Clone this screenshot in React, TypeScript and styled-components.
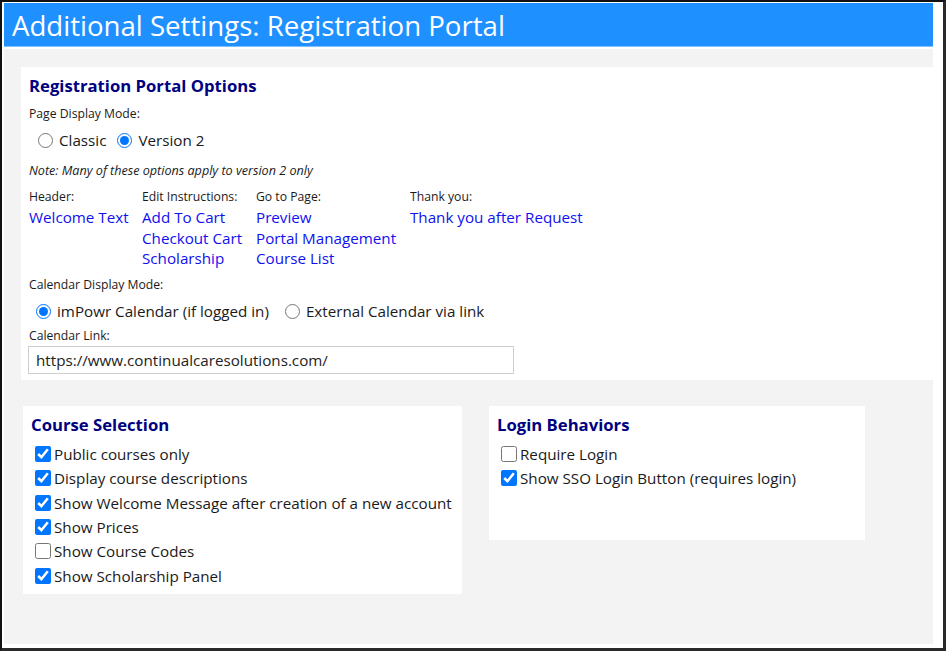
import React from "react";
import styled, { createGlobalStyle } from "styled-components";

const Global = createGlobalStyle`
  html, body { margin: 0; padding: 0; background: #fff; }
  body { font-family: "Open Sans", "Noto Sans", sans-serif; color: #1a1a1a; }
  * { box-sizing: border-box; }
`;

const Frame = styled.div`
  width: 946px;
  height: 651px;
  border-top: 2px solid #111;
  border-left: 2px solid #111;
  border-right: 3px solid #2a2a2a;
  border-bottom: 3px solid #2a2a2a;
  background: #fff;
  padding: 1px 10px 4px 2px;
  display: flex;
  flex-direction: column;
`;

const TitleBar = styled.div`
  height: 44px;
  background: #1e90ff;
  border-bottom: 1px solid #7fbfff;
  color: #fff;
  font-size: 27.6px;
  line-height: 44px;
  padding-left: 8px;
  flex: none;
`;

const Body = styled.div`
  margin-top: 2px;
  flex: 1;
  background: #f3f3f3;
  padding: 18px 0 0 17px;
  display: flex;
  flex-direction: column;
`;

const Panel = styled.div<{ $w?: number; $h?: number }>`
  background: #fff;
  ${(p) => (p.$w ? `width: ${p.$w}px;` : "")}
  ${(p) => (p.$h ? `height: ${p.$h}px;` : "")}
  padding: 7px 0 6px 8px;
`;

const PanelRow = styled.div`
  display: flex;
  gap: 27px;
  margin-top: 26px;
  margin-left: 2px;
  align-items: flex-start;
`;

const Heading = styled.div`
  color: #000080;
  font-weight: 700;
  font-size: 16.7px;
  line-height: 24px;
`;

const Label = styled.div<{ $mt?: number; $italic?: boolean }>`
  font-size: ${(p) => (p.$italic ? 12.6 : 12.2)}px;
  line-height: 16px;
  margin-top: ${(p) => p.$mt ?? 0}px;
  font-style: ${(p) => (p.$italic ? "italic" : "normal")};
`;

const RadioRow = styled.div<{ $mt?: number; $pl?: number }>`
  display: flex;
  align-items: center;
  height: 24px;
  margin-top: ${(p) => p.$mt ?? 0}px;
  padding-left: ${(p) => p.$pl ?? 0}px;
  font-size: 15.2px;
`;

const RadioLabel = styled.label<{ $gap?: number }>`
  display: flex;
  align-items: center;
  margin-right: ${(p) => p.$gap ?? 0}px;
`;

const Radio = styled.input.attrs({ type: "radio" })`
  width: 15px;
  height: 15px;
  margin: 0 6px 0 0;
  accent-color: #0075ff;
`;

const LinkGrid = styled.div`
  display: grid;
  grid-template-columns: 113px 114px 154px auto;
  margin-top: 10px;
`;

const Col = styled.div`
  display: flex;
  flex-direction: column;
`;

const ColLabel = styled.div`
  font-size: 12.2px;
  line-height: 16px;
  margin-bottom: 2px;
`;

const Link = styled.a`
  color: #1010f0;
  text-decoration: none;
  font-size: 15.2px;
  line-height: 20.5px;
  cursor: pointer;
`;

const TextInput = styled.input`
  display: block;
  margin-top: 2px;
  margin-left: -1px;
  width: 486px;
  height: 28px;
  border: 1px solid #cfcfcf;
  padding: 0 7px;
  font-family: inherit;
  font-size: 15.2px;
  color: #222;
  outline: none;
`;

const CheckList = styled.div<{ $pl: number }>`
  display: flex;
  flex-direction: column;
  margin-top: 5px;
  padding-left: ${(p) => p.$pl}px;
`;

const CheckRow = styled.label`
  display: flex;
  align-items: center;
  height: 24.3px;
  font-size: 15.2px;
`;

const Check = styled.input.attrs({ type: "checkbox" })`
  width: 16px;
  height: 16px;
  margin: 0 3px 0 0;
  accent-color: #0075ff;
`;

const courseOptions: [string, boolean][] = [
  ["Public courses only", true],
  ["Display course descriptions", true],
  ["Show Welcome Message after creation of a new account", true],
  ["Show Prices", true],
  ["Show Course Codes", false],
  ["Show Scholarship Panel", true],
];

const loginOptions: [string, boolean][] = [
  ["Require Login", false],
  ["Show SSO Login Button (requires login)", true],
];

export default function App() {
  return (
    <>
      <Global />
      <Frame>
        <TitleBar>Additional Settings: Registration Portal</TitleBar>
        <Body>
          <Panel>
            <Heading>Registration Portal Options</Heading>
            <Label $mt={8}>Page Display Mode:</Label>
            <RadioRow $mt={6} $pl={9}>
              <RadioLabel $gap={11}>
                <Radio name="mode" />
                Classic
              </RadioLabel>
              <RadioLabel>
                <Radio name="mode" defaultChecked />
                Version 2
              </RadioLabel>
            </RadioRow>
            <Label $mt={11} $italic>
              Note: Many of these options apply to version 2 only
            </Label>
            <LinkGrid>
              <Col>
                <ColLabel>Header:</ColLabel>
                <Link>Welcome Text</Link>
              </Col>
              <Col>
                <ColLabel>Edit Instructions:</ColLabel>
                <Link>Add To Cart</Link>
                <Link>Checkout Cart</Link>
                <Link>Scholarship</Link>
              </Col>
              <Col>
                <ColLabel>Go to Page:</ColLabel>
                <Link>Preview</Link>
                <Link>Portal Management</Link>
                <Link>Course List</Link>
              </Col>
              <Col>
                <ColLabel>Thank you:</ColLabel>
                <Link>Thank you after Request</Link>
              </Col>
            </LinkGrid>
            <Label $mt={8.5}>Calendar Display Mode:</Label>
            <RadioRow $mt={6} $pl={7}>
              <RadioLabel $gap={16}>
                <Radio name="cal" defaultChecked />
                imPowr Calendar (if logged in)
              </RadioLabel>
              <RadioLabel>
                <Radio name="cal" />
                External Calendar via link
              </RadioLabel>
            </RadioRow>
            <Label $mt={5}>Calendar Link:</Label>
            <TextInput defaultValue="https://www.continualcaresolutions.com/" />
          </Panel>
          <PanelRow>
            <Panel $w={439} $h={188}>
              <Heading>Course Selection</Heading>
              <CheckList $pl={4}>
                {courseOptions.map(([t, c]) => (
                  <CheckRow key={t}>
                    <Check defaultChecked={c} />
                    {t}
                  </CheckRow>
                ))}
              </CheckList>
            </Panel>
            <Panel $w={376} $h={134}>
              <Heading>Login Behaviors</Heading>
              <CheckList $pl={4}>
                {loginOptions.map(([t, c]) => (
                  <CheckRow key={t}>
                    <Check defaultChecked={c} />
                    {t}
                  </CheckRow>
                ))}
              </CheckList>
            </Panel>
          </PanelRow>
        </Body>
      </Frame>
    </>
  );
}
